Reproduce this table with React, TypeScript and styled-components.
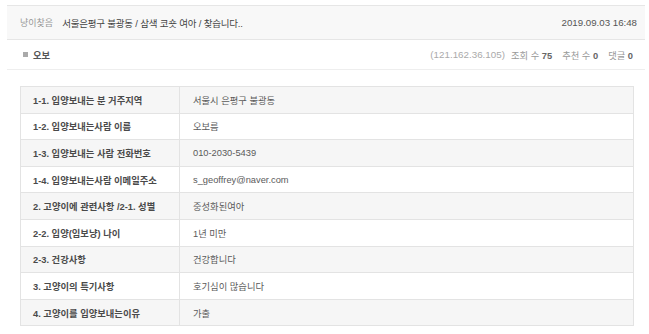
import styled, { createGlobalStyle } from "styled-components";

const GlobalStyle = createGlobalStyle`
  html, body {
    margin: 0;
    padding: 0;
    background: #fff;
  }
  body {
    font-family: "Liberation Sans", "Noto Sans CJK KR", sans-serif;
    color: #444;
  }
`

interface Row {
  label: string;
  value: string;
}

const rows: Row[] = [
  { label: "1-1. 입양보내는 분 거주지역", value: "서울시 은평구 불광동" },
  { label: "1-2. 입양보내는사람 이름", value: "오보름" },
  { label: "1-3. 입양보내는 사람 전화번호", value: "010-2030-5439" },
  { label: "1-4. 입양보내는사람 이메일주소", value: "s_geoffrey@naver.com" },
  { label: "2. 고양이에 관련사항 /2-1. 성별", value: "중성화된여아" },
  { label: "2-2. 입양(임보냥) 나이", value: "1년 미만" },
  { label: "2-3. 건강사항", value: "건강합니다" },
  { label: "3. 고양이의 특기사항", value: "호기심이 많습니다" },
  { label: "4. 고양이를 입양보내는이유", value: "가출" },
]

export default function App() {
  return (
    <>
      <GlobalStyle />
      <Page>
        <TitleBar>
          <Category>냥이찾음</Category>
          <Subject>서울은평구 불광동 / 삼색 코숏 여아 / 찾습니다..</Subject>
          <DateText>2019.09.03 16:48</DateText>
        </TitleBar>
        <InfoBar>
          <Writer>
            <Bullet />
            오보
          </Writer>
          <Stats>
            <Ip>(121.162.36.105)</Ip>
            <Stat>조회 수 <b>75</b></Stat>
            <Stat>추천 수 <b>0</b></Stat>
            <Stat>댓글 <b>0</b></Stat>
          </Stats>
        </InfoBar>
        <Table>
          <tbody>
            {rows.map((r, i) => (
              <Tr key={i} $odd={i % 2 === 0}>
                <Th>{r.label}</Th>
                <Td>{r.value}</Td>
              </Tr>
            ))}
          </tbody>
        </Table>
      </Page>
    </>
  )
}

const Page = styled.div`
  padding: 5px 4px 0 7px;
`

const TitleBar = styled.div`
  display: flex;
  align-items: center;
  height: 33px;
  padding: 0 8px 0 13px;
  background: #f8f8f8;
  border-top: 1px solid #e6e6e6;
  border-bottom: 1px solid #e6e6e6;
  font-size: 9.5px;
`

const Category = styled.span`
  color: #999;
  font-size: 9px;
  margin-right: 9px;
`

const Subject = styled.span`
  color: #444;
  flex: 1;
  letter-spacing: -0.2px;
`

const DateText = styled.span`
  color: #555;
  font-size: 9.7px;
`

const InfoBar = styled.div`
  display: flex;
  align-items: center;
  justify-content: space-between;
  height: 29px;
  padding: 0 12px 0 16px;
  border-bottom: 1px solid #eee;
  font-size: 9.3px;
`

const Writer = styled.span`
  display: flex;
  align-items: center;
  gap: 5px;
  font-weight: bold;
  color: #555;
`

const Bullet = styled.i`
  display: inline-block;
  width: 5px;
  height: 5px;
  background: #aaa;
`

const Stats = styled.span`
  display: flex;
  align-items: center;
  gap: 10px;
  color: #999;
  b {
    color: #666;
  }
`

const Ip = styled.span`
  font-size: 9.8px;
  color: #aaa;
  margin-right: -4px;
`

const Stat = styled.span``

const Table = styled.table`
  width: 614px;
  margin: 16px 0 0 13px;
  border-collapse: collapse;
  font-size: 9.3px;
  border: 1px solid #e3e3e3;
`

const Tr = styled.tr<{ $odd: boolean }>`
  height: 26.6px;
  background: ${p => (p.$odd ? "#f6f6f6" : "#fff")};
`

const Th = styled.th`
  width: 134px;
  padding: 0 12px;
  text-align: left;
  font-weight: bold;
  color: #4a4a4a;
  white-space: nowrap;
  border: 1px solid #e3e3e3;
`

const Td = styled.td`
  padding: 0 13px;
  color: #5a5a5a;
  border: 1px solid #e3e3e3;
`
